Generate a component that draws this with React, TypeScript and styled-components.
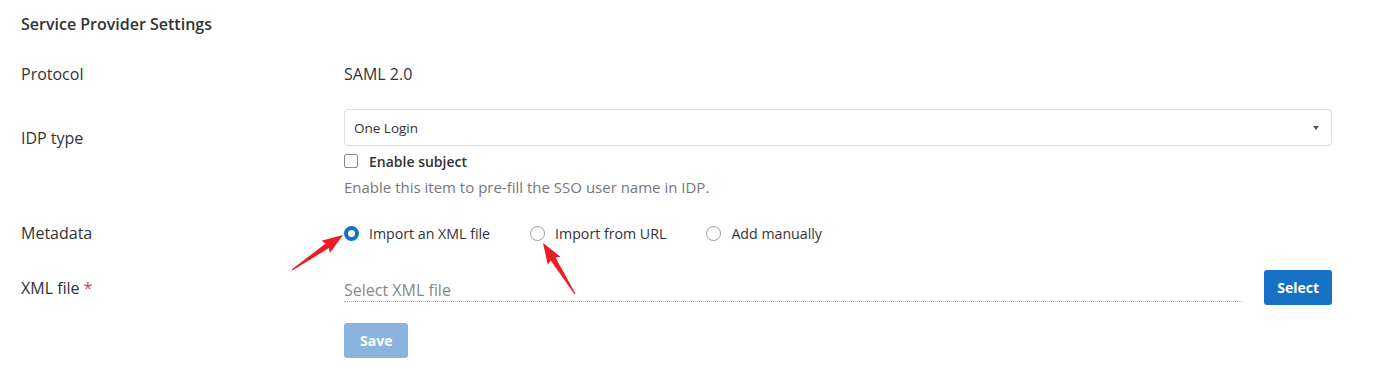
import React from "react";
import styled, { createGlobalStyle } from "styled-components";

const Global = createGlobalStyle`
  html, body { margin: 0; padding: 0; background: #fff; }
  body { font-family: "Open Sans", "Noto Sans", Arial, sans-serif; color: #333; }
  * { box-sizing: border-box; }
`;

const Page = styled.div`
  position: relative;
  width: 1391px;
  height: 369px;
  padding: 14px 59px 0 21px;
`;

const Title = styled.div`
  font-size: 16px;
  font-weight: 600;
  line-height: 20px;
  color: #333;
`;

const Row = styled.div<{ $mt: number }>`
  display: grid;
  grid-template-columns: 323px 1fr;
  margin-top: ${(p) => p.$mt}px;
  align-items: start;
`;

const Label = styled.div<{ $pt?: number }>`
  font-size: 16px;
  line-height: 20px;
  padding-top: ${(p) => p.$pt ?? 0}px;
  color: #333;
`;

const Star = styled.span`
  color: #e53935;
  margin-left: 4px;
`;

const Value = styled.div`
  font-size: 16px;
  line-height: 20px;
  color: #333;
`;

const Col = styled.div`
  display: flex;
  flex-direction: column;
`;

const SelectBox = styled.div`
  height: 37px;
  border: 1px solid #ddd;
  border-radius: 4px;
  display: flex;
  align-items: center;
  justify-content: space-between;
  padding: 0 12px 0 9px;
  font-size: 13.5px;
  color: #333;
`;

const Caret = styled.span`
  width: 0;
  height: 0;
  border-left: 3.5px solid transparent;
  border-right: 3.5px solid transparent;
  border-top: 4px solid #555;
`;

const CheckRow = styled.label`
  display: flex;
  align-items: center;
  gap: 11px;
  margin-top: 5px;
  height: 20px;
  font-size: 14px;
  font-weight: 600;
  color: #333;
`;

const Box = styled.span`
  width: 14px;
  height: 14px;
  border: 1px solid #8a8a8a;
  border-radius: 2px;
  background: #fff;
`;

const Help = styled.div`
  margin-top: 6px;
  font-size: 15px;
  line-height: 20px;
  color: #777;
`;

const Radios = styled.div`
  display: flex;
  align-items: center;
  height: 20px;
  gap: 40px;
`;

const RadioItem = styled.label`
  display: flex;
  align-items: center;
  gap: 10px;
  font-size: 14.2px;
  font-weight: 500;
  color: #333;
`;

const RadioDot = styled.span<{ $on?: boolean }>`
  width: 15px;
  height: 15px;
  border-radius: 50%;
  border: ${(p) => (p.$on ? "4px solid #1670c4" : "1px solid #999")};
  background: #fff;
`;

const FileRow = styled.div`
  display: flex;
  align-items: center;
  gap: 22px;
  height: 35px;
`;

const FileInput = styled.div`
  flex: 1;
  font-size: 16px;
  color: #888;
  line-height: 22px;
  padding-top: 5px;
  border-bottom: 1px dotted #aaa;
`;

const Btn = styled.button<{ $disabled?: boolean }>`
  height: 35px;
  padding: 0 ${(p) => (p.$disabled ? 16 : 13)}px;
  border: none;
  border-radius: 3px;
  background: ${(p) => (p.$disabled ? "#8ab4df" : "#1670c4")};
  color: #fff;
  font-family: inherit;
  font-size: 14px;
  font-weight: 700;
`;

const Overlay = styled.svg`
  position: absolute;
  left: 0;
  top: 0;
  pointer-events: none;
`;

function arrowPoints(tx: number, ty: number, px: number, py: number) {
  const dx = px - tx;
  const dy = py - ty;
  const len = Math.hypot(dx, dy);
  const ux = dx / len;
  const uy = dy / len;
  const nx = -uy;
  const ny = ux;
  const hl = 19;
  const bx = px - ux * hl;
  const by = py - uy * hl;
  const pts = [
    [tx + nx * 0.6, ty + ny * 0.6],
    [bx + nx * 2.8, by + ny * 2.8],
    [bx + nx * 7.5 - ux * 2, by + ny * 7.5 - uy * 2],
    [px, py],
    [bx - nx * 7.5 - ux * 2, by - ny * 7.5 - uy * 2],
    [bx - nx * 2.8, by - ny * 2.8],
    [tx - nx * 0.6, ty - ny * 0.6],
  ];
  return pts.map((p) => `${p[0].toFixed(1)},${p[1].toFixed(1)}`).join(" ");
}

export default function App() {
  return (
    <>
      <Global />
      <Page>
        <Title>Service Provider Settings</Title>
        <Row $mt={30}>
          <Label>Protocol</Label>
          <Value>SAML 2.0</Value>
        </Row>
        <Row $mt={25}>
          <Label $pt={19}>IDP type</Label>
          <Col>
            <SelectBox>
              <span>One Login</span>
              <Caret />
            </SelectBox>
            <CheckRow>
              <Box />
              Enable subject
            </CheckRow>
            <Help>Enable this item to pre-fill the SSO user name in IDP.</Help>
          </Col>
        </Row>
        <Row $mt={26}>
          <Label>Metadata</Label>
          <Radios>
            <RadioItem>
              <RadioDot $on />
              Import an XML file
            </RadioItem>
            <RadioItem>
              <RadioDot />
              Import from URL
            </RadioItem>
            <RadioItem>
              <RadioDot />
              Add manually
            </RadioItem>
          </Radios>
        </Row>
        <Row $mt={27}>
          <Label $pt={8}>
            XML file<Star>*</Star>
          </Label>
          <FileRow>
            <FileInput>Select XML file</FileInput>
            <Btn>Select</Btn>
          </FileRow>
        </Row>
        <Row $mt={18}>
          <div />
          <div>
            <Btn $disabled>Save</Btn>
          </div>
        </Row>
        <Overlay width={1391} height={369} viewBox="0 0 1391 369">
          <polygon points={arrowPoints(292, 270, 343, 235)} fill="#ec1c24" />
          <polygon points={arrowPoints(575, 294, 543, 243)} fill="#ec1c24" />
        </Overlay>
      </Page>
    </>
  );
}
